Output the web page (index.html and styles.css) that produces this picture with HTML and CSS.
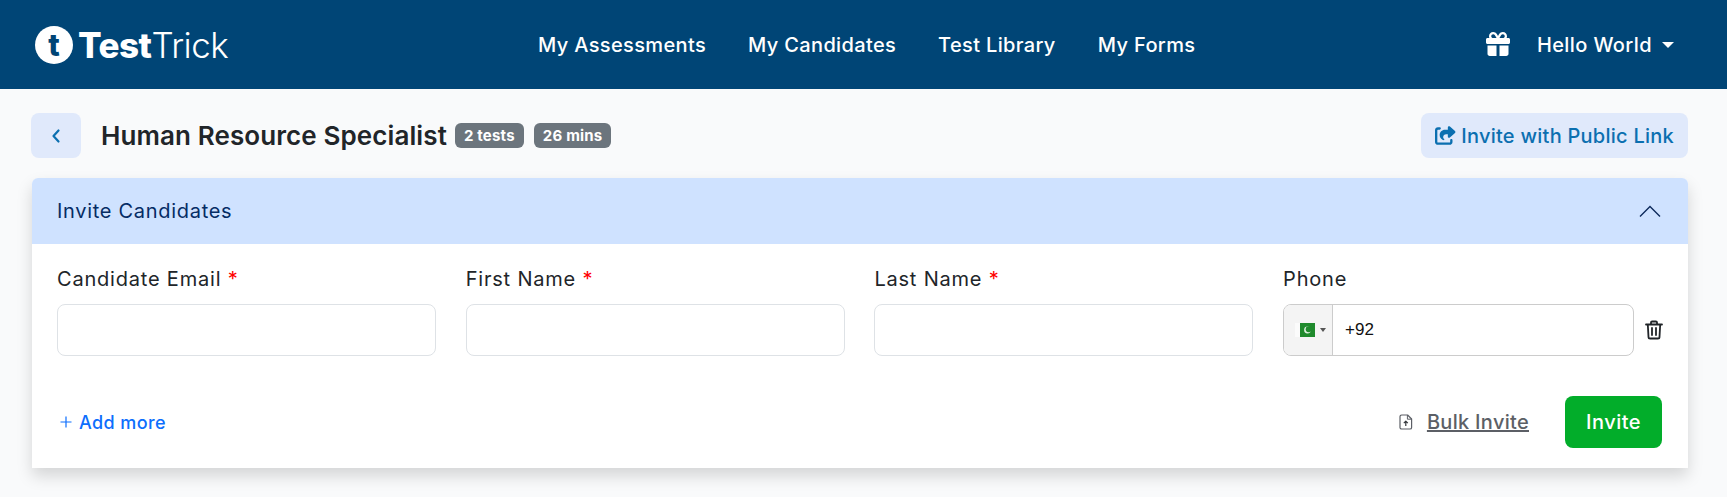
FILE: index.html
```html
<!DOCTYPE html>
<html lang="en">
<head>
    <meta charset="UTF-8">
    <meta name="viewport" content="width=device-width, initial-scale=1.0">
    <title>TestTrick</title>
    <link rel="stylesheet" href="styles.css">
</head>
<body>
    <header class="topbar">
        <a class="brand" href="#">
            <span class="brand-mark">t</span>
            <span class="brand-name"><b>Test</b>Trick</span>
        </a>
        <nav class="main-nav">
            <a href="#">My Assessments</a>
            <a href="#">My Candidates</a>
            <a href="#">Test Library</a>
            <a href="#">My Forms</a>
        </nav>
        <div class="user-area">
            <svg class="gift-icon" viewBox="0 0 512 512" fill="#fff"><path d="M190.5 68.8L225.3 128H224 152c-22.1 0-40-17.9-40-40s17.9-40 40-40h2.2c14.9 0 28.8 7.9 36.3 20.8zM64 88c0 14.4 3.5 28 9.6 40H32c-17.7 0-32 14.3-32 32v64c0 17.7 14.3 32 32 32H480c17.7 0 32-14.3 32-32V160c0-17.7-14.3-32-32-32H438.4c6.1-12 9.6-25.6 9.6-40c0-48.6-39.4-88-88-88h-2.2c-31.9 0-61.5 16.9-77.7 44.4L256 85.5l-24.1-41C215.7 16.9 186.1 0 154.2 0H152C103.4 0 64 39.4 64 88zm336 0c0 22.1-17.9 40-40 40H288h-1.3l34.8-59.2C329.1 55.9 342.9 48 357.8 48H360c22.1 0 40 17.9 40 40zM32 288V464c0 26.5 21.5 48 48 48H224V288H32zM288 512H432c26.5 0 48-21.5 48-48V288H288V512z"/></svg>
            <span class="user-name">Hello World</span>
            <span class="user-caret"></span>
        </div>
    </header>

    <main class="content">
        <div class="page-head">
            <button class="back-btn">
                <svg viewBox="0 0 12 16" width="12" height="16" fill="none" stroke="#0b6fb0" stroke-width="2.2" stroke-linecap="round" stroke-linejoin="round"><path d="M8.5 2.5L3.5 8l5 5.5"/></svg>
            </button>
            <h1 class="page-title">Human Resource Specialist</h1>
            <span class="badge">2 tests</span>
            <span class="badge">26 mins</span>
            <button class="public-btn">
                <svg viewBox="0 0 576 512" width="21" height="19" fill="#0b6fb0"><path d="M352 224H305.5c-45 0-81.5 36.5-81.5 81.5c0 22.3 10.3 34.3 19.2 40.5c6.8 4.7 12.8 12 12.8 20.3c0 9.8-8 17.8-17.8 17.8h-2.5c-2.4 0-4.8-.4-7.1-1.4C210.8 374.8 128 333.4 128 240c0-79.5 64.5-144 144-144h80V34.7C352 15.5 367.5 0 386.7 0c8.6 0 16.8 3.2 23.2 8.9L548.1 133.3c7.6 6.8 11.9 16.5 11.9 26.7s-4.3 19.9-11.9 26.7l-139 125.1c-5.9 5.3-13.5 8.2-21.4 8.2H384c-17.7 0-32-14.3-32-32V224zM80 96c-8.8 0-16 7.2-16 16V432c0 8.8 7.2 16 16 16H400c8.8 0 16-7.2 16-16V384c0-17.7 14.3-32 32-32s32 14.3 32 32v48c0 44.2-35.8 80-80 80H80c-44.2 0-80-35.8-80-80V112C0 67.8 35.8 32 80 32h48c17.7 0 32 14.3 32 32s-14.3 32-32 32H80z"/></svg>
                Invite with Public Link
            </button>
        </div>

        <section class="invite-card">
            <div class="card-head">
                <span>Invite Candidates</span>
                <svg viewBox="0 0 22 12" width="22" height="12" fill="none" stroke="#0d2a5c" stroke-width="1.4"><path d="M1 11.5L11 1.5l10 10"/></svg>
            </div>
            <div class="card-body">
                <div class="field-row">
                    <div class="field">
                        <label>Candidate Email <i>*</i></label>
                        <input type="text">
                    </div>
                    <div class="field">
                        <label>First Name <i>*</i></label>
                        <input type="text">
                    </div>
                    <div class="field">
                        <label>Last Name <i>*</i></label>
                        <input type="text">
                    </div>
                    <div class="field field-phone">
                        <label>Phone</label>
                        <div class="phone-box">
                            <div class="flag-select">
                                <svg viewBox="0 0 20 14" width="20" height="14"><rect width="5" height="14" fill="#fbfbfb"/><rect x="5" width="15" height="14" fill="#1f8a2c"/><circle cx="12.5" cy="7" r="3.4" fill="#dff0df"/><circle cx="13.7" cy="6.2" r="3" fill="#1f8a2c"/></svg>
                                <span class="flag-caret"></span>
                            </div>
                            <span class="phone-code">+92</span>
                        </div>
                    </div>
                    <svg class="trash-icon" viewBox="0 0 18 20" width="18" height="20" fill="none" stroke="#212529" stroke-width="1.8" stroke-linecap="round" stroke-linejoin="round"><path d="M1 4.5h16M6 4.5V2.6c0-.6.5-1.1 1.1-1.1h3.8c.6 0 1.1.5 1.1 1.1v1.9M2.8 4.5l.7 12.4c0 .9.7 1.6 1.6 1.6h7.8c.9 0 1.6-.7 1.6-1.6l.7-12.4M7 8v7M11 8v7"/></svg>
                </div>
                <div class="action-row">
                    <a class="add-more" href="#">
                        <svg viewBox="0 0 12 12" width="12" height="12" fill="none" stroke="#0d6efd" stroke-width="1.2"><path d="M6 0.5v11M0.5 6h11"/></svg>
                        Add more
                    </a>
                    <div class="action-right">
                        <svg viewBox="0 0 14 16" width="14" height="16" fill="none" stroke="#5c5f66" stroke-width="1.2" stroke-linejoin="round"><path d="M2.6 1h6l4 4v8.4c0 .9-.7 1.6-1.6 1.6H2.6c-.9 0-1.6-.7-1.6-1.6V2.6C1 1.7 1.7 1 2.6 1z"/><path d="M8.4 1v4.2h4.2" stroke-width="1"/><path d="M6.8 12V7.4M4.8 9.2l2-2 2 2" stroke="#33363b"/></svg>
                        <a class="bulk-link" href="#">Bulk Invite</a>
                        <button class="invite-btn">Invite</button>
                    </div>
                </div>
            </div>
        </section>
    </main>
</body>
</html>
```

FILE: styles.css
```css
* {
    box-sizing: border-box;
    margin: 0;
    padding: 0;
}
html, body {
    height: 100%;
    overflow: hidden;
}
body {
    background: #f9fafb;
    font-family: Inter, 'Noto Sans', sans-serif;
    color: #212529;
}
a {
    text-decoration: none;
    color: inherit;
}
button {
    font-family: inherit;
    border: none;
    cursor: pointer;
}

/* top bar */
.topbar {
    display: flex;
    align-items: center;
    height: 89px;
    background: #004576;
    color: #fff;
    padding: 0 53px 0 35px;
}
.brand {
    display: flex;
    align-items: center;
    gap: 5px;
    width: 503px;
}
.brand-mark {
    display: flex;
    align-items: center;
    justify-content: center;
    width: 38px;
    height: 38px;
    border-radius: 50%;
    background: #fff;
    color: #004576;
    font-size: 30px;
    font-weight: 800;
    line-height: 1;
}
.brand-name {
    font-size: 35px;
    font-weight: 300;
    letter-spacing: -0.5px;
}
.brand-name b {
    font-weight: 800;
}
.main-nav {
    display: flex;
    gap: 42px;
    font-size: 20px;
    font-weight: 500;
    letter-spacing: 0.35px;
}
.user-area {
    display: flex;
    align-items: center;
    margin-left: auto;
}
.gift-icon {
    width: 24px;
    height: 24px;
    margin: 0 27px 2px 0;
}
.user-name {
    font-size: 20px;
    font-weight: 500;
    letter-spacing: 0.4px;
}
.user-caret {
    margin-left: 10px;
    border-top: 6px solid #fff;
    border-left: 6px solid transparent;
    border-right: 6px solid transparent;
}

/* page */
.content {
    padding: 24px 39px 0 31px;
}
.page-head {
    display: flex;
    align-items: center;
    height: 45px;
}
.back-btn {
    display: flex;
    align-items: center;
    justify-content: center;
    width: 50px;
    height: 45px;
    border-radius: 8px;
    background: #e0e9fb;
    margin-right: 20px;
}
.page-title {
    font-size: 26px;
    font-weight: 600;
    letter-spacing: 0.1px;
    color: #212529;
    margin-right: 8px;
}
.badge {
    display: inline-block;
    height: 25px;
    line-height: 25px;
    padding: 0 9px;
    border-radius: 6px;
    background: #6c757d;
    color: #fff;
    font-size: 15px;
    font-weight: 700;
    letter-spacing: 0.2px;
    margin-right: 10px;
}
.public-btn {
    display: flex;
    align-items: center;
    gap: 5px;
    margin-left: auto;
    height: 45px;
    padding: 0 14px;
    border-radius: 8px;
    background: #e0e9fb;
    color: #0b6fb0;
    font-size: 20px;
    font-weight: 500;
    letter-spacing: 0.25px;
}

/* invite card */
.invite-card {
    margin: 20px 0 0 1px;
    background: #fff;
    border-radius: 6px 6px 0 0;
    box-shadow: 0 8px 16px rgba(0, 0, 0, 0.15);
}
.card-head {
    display: flex;
    align-items: center;
    justify-content: space-between;
    height: 66px;
    padding: 0 27px 0 25px;
    background: #cfe2ff;
    border-radius: 6px 6px 0 0;
    color: #052c65;
    font-size: 20px;
    letter-spacing: 0.7px;
}
.card-body {
    padding: 22px 26px 20px 25px;
}
.field-row {
    display: flex;
    align-items: flex-end;
    gap: 29.7px;
}
.field {
    flex: none;
    width: 379px;
}
.field-phone {
    width: 351px;
}
.field label {
    display: block;
    font-size: 20px;
    letter-spacing: 0.8px;
    line-height: 27px;
    margin-bottom: 11px;
    color: #212529;
}
.field label i {
    font-style: normal;
    color: #f00;
}
.field input {
    display: block;
    width: 100%;
    height: 52px;
    border: 1px solid #dee2e6;
    border-radius: 8px;
    background: #fff;
}
.phone-box {
    display: flex;
    align-items: center;
    height: 52px;
    border: 1px solid #ccc;
    border-radius: 8px;
    overflow: hidden;
}
.flag-select {
    display: flex;
    align-items: center;
    gap: 5px;
    height: 100%;
    width: 49px;
    padding-left: 11px;
    background: #f4f4f4;
    border-right: 1px solid #ccc;
}
.flag-caret {
    border-top: 4px solid #555;
    border-left: 3px solid transparent;
    border-right: 3px solid transparent;
}
.phone-code {
    padding-left: 12px;
    font-family: 'Liberation Sans', Arial, sans-serif;
    font-size: 17px;
    color: #111;
}
.trash-icon {
    flex: none;
    margin: 0 0 16px -19px;
}
.action-row {
    display: flex;
    align-items: center;
    justify-content: space-between;
    margin-top: 40px;
}
.add-more {
    display: flex;
    align-items: center;
    gap: 7px;
    padding-left: 3px;
    color: #0d6efd;
    font-size: 18px;
    font-weight: 500;
    letter-spacing: 0.4px;
}
.action-right {
    display: flex;
    align-items: center;
}
.bulk-link {
    margin-left: 14px;
    font-size: 20px;
    font-weight: 500;
    letter-spacing: 0.3px;
    color: #5c5f66;
    text-decoration: underline;
}
.invite-btn {
    width: 97px;
    height: 52px;
    margin-left: 36px;
    border-radius: 8px;
    background: #02ad2a;
    color: #fff;
    font-size: 20px;
    font-weight: 500;
    letter-spacing: 0.5px;
}
```
